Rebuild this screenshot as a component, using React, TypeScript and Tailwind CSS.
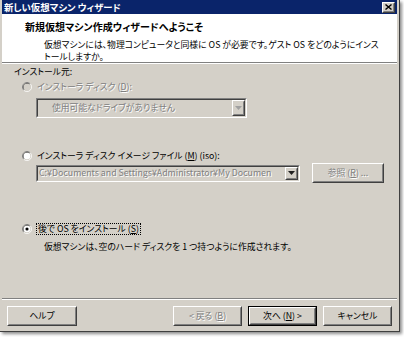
import React from "react";

const FONT = "font-['Noto_Sans_CJK_JP',sans-serif] [font-feature-settings:'palt']";
const DIS = "text-[#808080] [text-shadow:1px_1px_0_#ffffff]";

function Radio({ state }: { state: "disabled" | "off" | "on" }) {
  const fill = state === "disabled" ? "#d4d0c8" : "#ffffff";
  return (
    <svg width="10" height="10" viewBox="0 0 12 12" className="shrink-0">
      <path d="M9.89 2.11 A5.5 5.5 0 0 0 2.11 9.89" fill="none" stroke="#808080" strokeWidth="1" />
      <path d="M2.11 9.89 A5.5 5.5 0 0 0 9.89 2.11" fill="none" stroke="#ffffff" strokeWidth="1" />
      <path d="M9.18 2.82 A4.5 4.5 0 0 0 2.82 9.18" fill="none" stroke="#404040" strokeWidth="1" />
      <path d="M2.82 9.18 A4.5 4.5 0 0 0 9.18 2.82" fill="none" stroke="#d4d0c8" strokeWidth="1" />
      <circle cx="6" cy="6" r="4" fill={fill} />
      {state === "on" && <circle cx="6" cy="6" r="1.9" fill="#000000" />}
    </svg>
  );
}

function Raised({ children, className = "" }: { children?: React.ReactNode; className?: string }) {
  return (
    <div className={"border border-t-white border-l-white border-r-[#404040] border-b-[#404040] bg-[#d4d0c8] " + className}>
      <div className="w-full h-full border border-t-[#d4d0c8] border-l-[#d4d0c8] border-r-[#808080] border-b-[#808080] flex items-center justify-center">
        {children}
      </div>
    </div>
  );
}

function Arrow({ color }: { color: string }) {
  return (
    <svg width="7" height="4" viewBox="0 0 7 4">
      <path d="M0 0 H7 L3.5 4 Z" fill={color} />
    </svg>
  );
}

function Combo({ width, height, text, textClass, arrowColor }: { width: string; height: string; text: string; textClass: string; arrowColor: string }) {
  return (
    <div className={"border border-t-[#808080] border-l-[#808080] border-b-white border-r-white " + width + " " + height}>
      <div className="w-full h-full border border-t-[#404040] border-l-[#404040] border-b-[#d4d0c8] border-r-[#d4d0c8] bg-[#d4d0c8] flex items-center">
        <div className={"flex-1 whitespace-nowrap leading-[12px] " + textClass}>{text}</div>
        <Raised className="w-[13px] h-full shrink-0">
          <Arrow color={arrowColor} />
        </Raised>
      </div>
    </div>
  );
}

function U({ children }: { children: React.ReactNode }) {
  return <span className="underline underline-offset-1">{children}</span>;
}

export default function App() {
  return (
    <div className={"w-[404px] h-[337px] bg-white text-[8.8px] leading-[12px] text-black " + FONT}>
      <div className="w-[400px] h-[332px] bg-[#d4d0c8] border-r border-b border-[#404040] pl-[2px] pr-[2px] flex flex-col shadow-[2px_2px_3px_rgba(0,0,0,0.45)]">
        {/* Title bar */}
        <div className="h-[14px] bg-[#0a246a] flex items-center justify-between pl-[2px] pr-[2px] shrink-0">
          <span className="text-white font-bold text-[9.4px] leading-[14px]">新しい仮想マシン ウィザード</span>
          <Raised className="w-[13px] h-[11px]">
            <svg width="7" height="6" viewBox="0 0 7 6">
              <path d="M0.5 0.5 L6.5 5.5 M6.5 0.5 L0.5 5.5" stroke="#000" strokeWidth="1.4" />
            </svg>
          </Raised>
        </div>
        {/* Header */}
        <div className="h-[48px] bg-white shrink-0 pt-[7px] pl-[23px]">
          <div className="font-bold text-[10px] leading-[12px]">新規仮想マシン作成ウィザードへようこそ</div>
          <div className="mt-[6px] pl-[19px] leading-[12px]">
            <div className="whitespace-nowrap">仮想マシンには、物理コンピュータと同様に OS が必要です。ゲスト OS をどのようにインス</div>
            <div>トールしますか。</div>
          </div>
        </div>
        <div className="h-px bg-[#808080] shrink-0" />
        <div className="h-px bg-white shrink-0" />
        {/* Body */}
        <div className="h-[234px] shrink-0 pl-[12px] flex flex-col">
          <div className="mt-[2px] h-[12px]">インストール元:</div>
          <div className="mt-[3px] h-[12px] ml-[8px] flex items-center gap-[5px]">
            <Radio state="disabled" />
            <span className={DIS}>インストーラ ディスク (<U>D</U>):</span>
          </div>
          <div className="mt-[5px] ml-[22px]">
            <Combo width="w-[211px]" height="h-[20px]" text="使用可能なドライブがありません" textClass={"pl-[14px] " + DIS} arrowColor="#a0a0a0" />
          </div>
          <div className="mt-[32px] h-[12px] ml-[8px] flex items-center gap-[5px]">
            <Radio state="off" />
            <span>インストーラ ディスク イメージ ファイル (<U>M</U>) (iso):</span>
          </div>
          <div className="mt-[1px] ml-[22px] h-[20px] flex items-center gap-[12px]">
            <Combo width="w-[264px]" height="h-[17px]" text="C:¥Documents and Settings¥Administrator¥My Documen" textClass={"pl-[1px] " + DIS} arrowColor="#202020" />
            <Raised className="w-[72px] h-[20px]">
              <span className={DIS}>参照 (<U>R</U>) ...</span>
            </Raised>
          </div>
          <div className="mt-[40px] h-[12px] ml-[8px] flex items-center gap-[4px]">
            <Radio state="on" />
            <span className="border border-dotted border-black px-[1px] leading-[10px]">後で OS をインストール (<U>S</U>)</span>
          </div>
          <div className="mt-[6px] ml-[30px] h-[12px]">仮想マシンは、空のハード ディスクを 1 つ持つように作成されます。</div>
        </div>
        <div className="h-px bg-[#808080] shrink-0" />
        <div className="h-px bg-white shrink-0" />
        {/* Buttons */}
        <div className="flex-1 px-[5px] pt-[6px] flex">
          <Raised className="w-[70px] h-[20px]">
            <span>ヘルプ</span>
          </Raised>
          <div className="flex-1" />
          <Raised className="w-[69px] h-[20px]">
            <span className={DIS}>&lt; 戻る (<U>B</U>)</span>
          </Raised>
          <div className="w-[6px]" />
          <div className="w-[69px] h-[20px] border border-black">
            <Raised className="w-full h-full">
              <span>次へ (<U>N</U>) &gt;</span>
            </Raised>
          </div>
          <div className="w-[6px]" />
          <Raised className="w-[69px] h-[20px]">
            <span>キャンセル</span>
          </Raised>
        </div>
      </div>
    </div>
  );
}
